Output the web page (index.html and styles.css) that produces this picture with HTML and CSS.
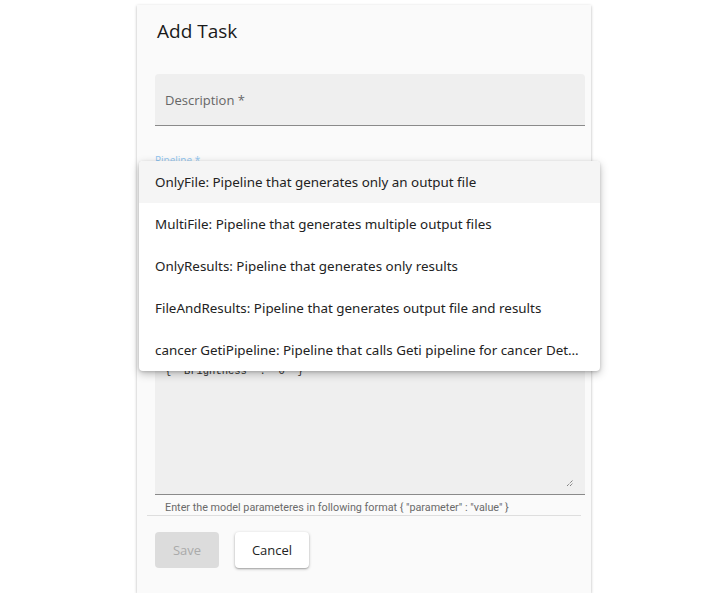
FILE: index.html
```html
<!DOCTYPE html>
<html>
<head>
<meta charset="utf-8">
<link rel="stylesheet" href="styles.css">
</head>
<body>
<div class="page">
  <div class="card">
    <h2 class="title">Add Task</h2>
    <div class="field filled desc">
      <span class="label">Description *</span>
    </div>
    <div class="select-wrap">
      <span class="small-label">Pipeline *</span>
      <div class="field filled select"></div>
    </div>
    <div class="field filled area">
      <span class="code">{ "Brightness" : "0" }</span>
      <svg class="grip" width="8" height="8" viewBox="0 0 8 8"><path d="M1 7L7 1M4 7L7 4" stroke="#555" stroke-width="1" stroke-dasharray="1 1"/></svg>
    </div>
    <div class="helper">Enter the model parameteres in following format { "parameter" : "value" }</div>
    <div class="actions">
      <button class="btn save">Save</button>
      <button class="btn cancel">Cancel</button>
    </div>
    <ul class="menu">
      <li class="active">OnlyFile: Pipeline that generates only an output file</li>
      <li>MultiFile: Pipeline that generates multiple output files</li>
      <li>OnlyResults: Pipeline that generates only results</li>
      <li>FileAndResults: Pipeline that generates output file and results</li>
      <li>cancer GetiPipeline: Pipeline that calls Geti pipeline for cancer Detection</li>
    </ul>
  </div>
</div>
</body>
</html>
```
FILE: styles.css
```css
* { box-sizing: border-box; }
html, body { margin: 0; padding: 0; background: #fff; }
body { font-family: "Open Sans", "Noto Sans", sans-serif; color: #222; }
.page { padding: 5px 0 0 137px; }
.card {
  position: relative;
  width: 454px;
  height: 588px;
  background: #fafafa;
  box-shadow: 0 1px 3px rgba(0,0,0,0.25), 0 1px 1px rgba(0,0,0,0.1);
  padding: 13px 6px 0 18px;
}
.title {
  margin: 0 0 0 2px;
  font-size: 19px;
  font-weight: 400;
  line-height: 26px;
  color: #1a1a1a;
}
.field {
  position: relative;
  background: #efefef;
  border-bottom: 1px solid #8a8a8a;
  border-radius: 4px 4px 0 0;
}
.desc {
  margin-top: 30px;
  height: 52px;
  display: flex;
  align-items: center;
  padding-left: 10px;
}
.label { font-size: 13px; color: #666; }
.select-wrap { margin-top: 28px; }
.small-label {
  display: block;
  font-size: 10px;
  line-height: 12px;
  color: #90c4ee;
}
.select { height: 40px; background: #fafafa; border-bottom: none; }
.area {
  margin-top: 140px;
  height: 149px;
  padding: 0 10px;
}
.code {
  position: absolute;
  left: 10px;
  top: 19px;
  font-family: "Liberation Mono", monospace;
  font-size: 10.5px;
  line-height: 12px;
  color: #333;
}
.grip { position: absolute; right: 11px; bottom: 7px; }
.helper {
  margin: 0 4px 0 -8px;
  padding: 6px 0 0 18px;
  height: 21px;
  font-family: "Roboto", sans-serif;
  font-size: 10.8px;
  color: #6a6a6a;
  line-height: 14px;
  white-space: nowrap;
  border-bottom: 1px solid #dedede;
}
.actions {
  margin-top: 16px;
  display: flex;
  gap: 16px;
}
.btn {
  height: 36px;
  border: none;
  border-radius: 4px;
  font-family: "Open Sans", sans-serif;
  font-size: 13px;
  padding: 0;
}
.save { width: 64px; background: #dcdcdc; color: #aaa; }
.cancel {
  width: 74px;
  background: #fff;
  color: #222;
  box-shadow: 0 1px 3px rgba(0,0,0,0.3), 0 1px 1px rgba(0,0,0,0.12);
}
.menu {
  position: absolute;
  left: 2px;
  top: 156px;
  width: 461px;
  margin: 0;
  padding: 0;
  list-style: none;
  background: #fff;
  border-radius: 4px;
  box-shadow: 0 3px 8px rgba(0,0,0,0.25), 0 1px 3px rgba(0,0,0,0.15);
  overflow: hidden;
}
.menu li {
  height: 42px;
  line-height: 42px;
  padding: 0 16px;
  font-family: "Noto Sans", sans-serif;
  font-size: 13.4px;
  color: #222;
  white-space: nowrap;
  overflow: hidden;
  text-overflow: ellipsis;
}
.menu li.active { background: #f5f5f5; }
```
